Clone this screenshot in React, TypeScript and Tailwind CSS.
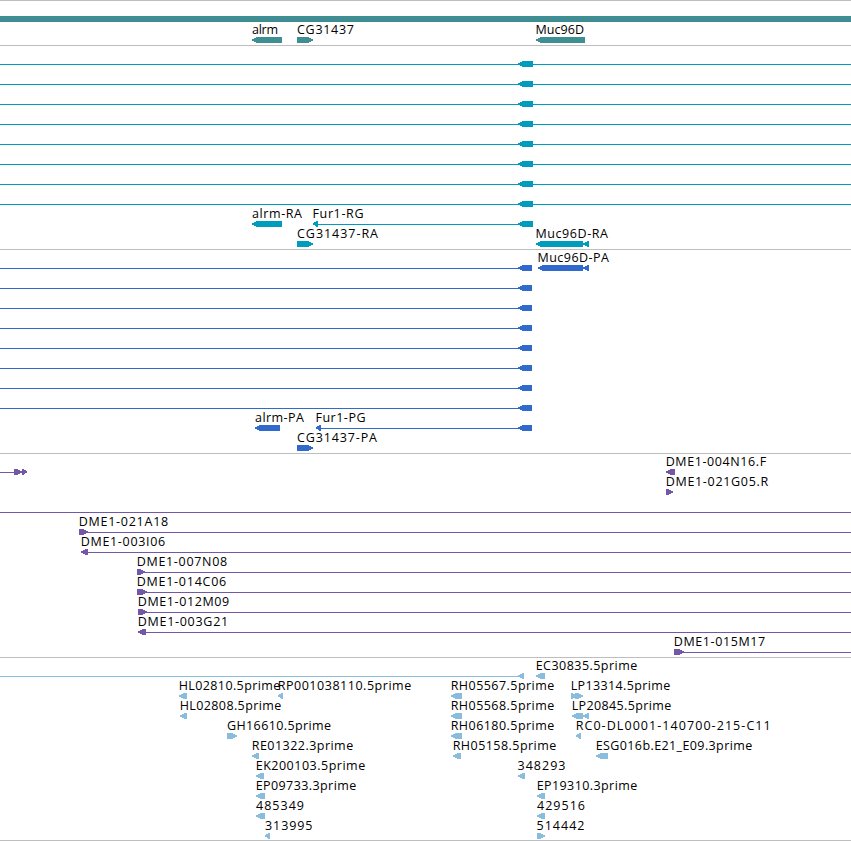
import React from 'react';

type Direction = 'left' | 'right';

interface Glyph {
  from: number;
  to: number;
  dir: Direction;
}

interface Label {
  text: string;
  x: number;
  length: number;
}

interface Row {
  lines?: [number, number][];
  glyphs?: Glyph[];
  labels?: Label[];
}

const VIEW_END = 851;

const left = (from: number, to: number): Glyph => ({ from, to, dir: 'left' });
const right = (from: number, to: number): Glyph => ({ from, to, dir: 'right' });
const label = (text: string, x: number, length: number): Label => ({ text, x, length });

const genes: Row[] = [
  {
    glyphs: [left(252, 282), right(297, 313), left(536, 585)],
    labels: [label('alrm', 252, 26), label('CG31437', 297, 57), label('Muc96D', 535.5, 48.5)],
  },
];

const transcripts: Row[] = [
  ...Array.from({ length: 8 }, (): Row => ({ lines: [[0, VIEW_END]], glyphs: [left(518, 533)] })),
  {
    lines: [[316, 520]],
    glyphs: [left(252, 282), left(313, 318), left(518, 533)],
    labels: [label('alrm-RA', 252, 50), label('Fur1-RG', 312.5, 51)],
  },
  {
    glyphs: [right(297, 313), left(536, 583), left(583, 589)],
    labels: [label('CG31437-RA', 297, 81), label('Muc96D-RA', 535.5, 72.5)],
  },
];

const proteins: Row[] = [
  {
    lines: [[0, 520]],
    glyphs: [left(518, 532), left(538, 583), left(583, 589)],
    labels: [label('Muc96D-PA', 537.5, 71.5)],
  },
  ...Array.from({ length: 7 }, (): Row => ({ lines: [[0, 520]], glyphs: [left(518, 532)] })),
  {
    lines: [[319, 520]],
    glyphs: [left(255, 280), left(316, 321), left(518, 532)],
    labels: [label('alrm-PA', 255, 49), label('Fur1-PG', 315.5, 50)],
  },
  {
    glyphs: [right(297, 313)],
    labels: [label('CG31437-PA', 297, 80)],
  },
];

const clones: Row[] = [
  {
    lines: [[0, 16]],
    glyphs: [right(14, 22), right(22, 27), left(666, 675)],
    labels: [label('DME1-004N16.F', 665.7, 100.5)],
  },
  { glyphs: [right(666, 673)], labels: [label('DME1-021G05.R', 665.7, 102.5)] },
  { lines: [[0, VIEW_END]] },
  { lines: [[83, VIEW_END]], glyphs: [right(79, 88)], labels: [label('DME1-021A18', 78.7, 89.5)] },
  { lines: [[84, VIEW_END]], glyphs: [left(81, 88)], labels: [label('DME1-003I06', 80.7, 84.5)] },
  { lines: [[140, VIEW_END]], glyphs: [right(137, 145)], labels: [label('DME1-007N08', 136.7, 90.5)] },
  { lines: [[140, VIEW_END]], glyphs: [right(137, 147)], labels: [label('DME1-014C06', 136.7, 89.5)] },
  { lines: [[141, VIEW_END]], glyphs: [right(138, 147)], labels: [label('DME1-012M09', 137.7, 91.5)] },
  { lines: [[141, VIEW_END]], glyphs: [left(138, 146)], labels: [label('DME1-003G21', 137.7, 90.5)] },
  { lines: [[677, VIEW_END]], glyphs: [right(674, 684)], labels: [label('DME1-015M17', 673.7, 91.5)] },
];

const ests: Row[] = [
  {
    lines: [[0, 520]],
    glyphs: [left(518, 524), left(536, 545)],
    labels: [label('EC30835.5prime', 535.7, 101.5)],
  },
  {
    glyphs: [left(179, 187), left(278, 283), left(451, 462), right(571, 577), right(575, 583)],
    labels: [
      label('HL02810.5prime', 178.7, 101.5),
      label('RP001038110.5prime', 277.7, 133.5),
      label('RH05567.5prime', 450.7, 103.5),
      label('LP13314.5prime', 570.7, 99.5),
    ],
  },
  {
    glyphs: [left(180, 187), left(451, 462), left(572, 583), left(583, 589)],
    labels: [
      label('HL02808.5prime', 179.7, 101.5),
      label('RH05568.5prime', 450.7, 103.5),
      label('LP20845.5prime', 571.7, 99.5),
    ],
  },
  {
    glyphs: [right(227, 237), left(451, 462), left(576, 581)],
    labels: [
      label('GH16610.5prime', 227, 104),
      label('RH06180.5prime', 450.7, 103.5),
      label('RC0-DL0001-140700-215-C11', 575.7, 195),
    ],
  },
  {
    glyphs: [left(252, 259), left(453, 461), left(596, 608)],
    labels: [
      label('RE01322.3prime', 251.7, 101.5),
      label('RH05158.5prime', 452.7, 103.5),
      label('ESG016b.E21_E09.3prime', 595.7, 156.5),
    ],
  },
  {
    glyphs: [left(256, 264), left(518, 525)],
    labels: [label('EK200103.5prime', 255.7, 109.5), label('348293', 517.5, 48)],
  },
  {
    glyphs: [left(256, 265), left(537, 545)],
    labels: [label('EP09733.3prime', 255.7, 100.5), label('EP19310.3prime', 536.7, 100.5)],
  },
  {
    glyphs: [left(256, 265), left(537, 545)],
    labels: [label('485349', 256, 48), label('429516', 537, 48)],
  },
  {
    glyphs: [left(265, 270), right(537, 545)],
    labels: [label('313995', 265, 47.5), label('514442', 536.5, 48)],
  },
];

function glyphPoints({ from, to, dir }: Glyph) {
  const head = Math.min(to - from, 6);
  // blunt tip on the strand side, six pixel tall body behind it
  if (dir === 'left') {
    return `${from},16.4 ${from + head - 1},14 ${to},14 ${to},20 ${from + head - 1},20 ${from},17.6`;
  }
  return `${to},16.4 ${to - head + 1},14 ${from},14 ${from},20 ${to - head + 1},20 ${to},17.6`;
}

function TrackRow({ row }: { row: Row }) {
  return (
    <svg className="block h-5 w-full overflow-visible">
      {row.lines?.map(([from, to]) => (
        <rect key={from} x={from} y={17} width={to - from} height={1} fill="currentColor" />
      ))}
      {row.glyphs?.map((glyph) => (
        <polygon key={glyph.from} points={glyphPoints(glyph)} fill="currentColor" shapeRendering="crispEdges" />
      ))}
      {row.labels?.map(({ text, x, length }) => (
        <text key={text} x={x} y={11} textLength={length} className="fill-black text-[12.5px]">
          {text}
        </text>
      ))}
    </svg>
  );
}

function Track({ rows, className }: { rows: Row[]; className: string }) {
  return (
    <section className={`flex flex-col border-b border-[#bebebe] pt-px ${className}`}>
      {rows.map((row, i) => (
        <TrackRow key={i} row={row} />
      ))}
    </section>
  );
}

export default function App() {
  return (
    <main className="h-[841px] w-[851px] overflow-hidden border-t border-[#bebebe] bg-white font-['Open_Sans','Noto_Sans',sans-serif]">
      <div className="mt-[15px] h-1.5 bg-[#3f8e94]" />
      <Track rows={genes} className="pb-0.5 text-[#3f8e94]" />
      <Track rows={transcripts} className="pb-0.5 text-[#009cbd]" />
      <Track rows={proteins} className="pb-0.5 text-[#306acc]" />
      <Track rows={clones} className="pb-0.5 text-[#7557a8]" />
      <Track rows={ests} className="pb-px text-[#8abddd]" />
    </main>
  );
}
